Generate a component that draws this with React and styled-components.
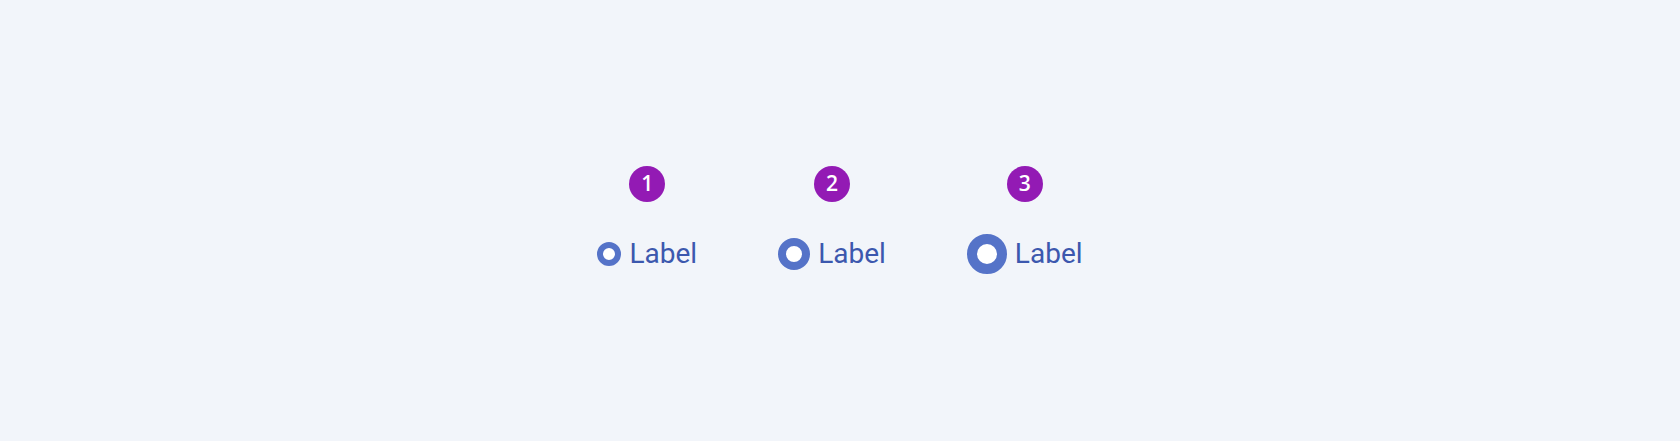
import styled, { createGlobalStyle } from "styled-components";

const GlobalStyle = createGlobalStyle`
  html, body {
    margin: 0;
    padding: 0;
    background: #f2f5fa;
  }
  body {
    font-family: "Open Sans", "Noto Sans", sans-serif;
  }
`;

const Page = styled.div`
  height: 439px;
  display: flex;
  align-items: center;
  justify-content: center;
  gap: 81px;
`;

const Column = styled.div`
  display: flex;
  flex-direction: column;
  align-items: center;
  gap: 32px;
`;

const Badge = styled.div`
  width: 36px;
  height: 36px;
  border-radius: 50%;
  background: #931ab4;
  color: #ffffff;
  display: flex;
  align-items: center;
  justify-content: center;
  font-size: 21px;
  font-weight: 600;
  line-height: 1;
`;

const RadioRow = styled.label`
  height: 40px;
  display: flex;
  align-items: center;
  gap: 8px;
`;

const Dot = styled.span`
  box-sizing: border-box;
  width: ${(p) => p.$size}px;
  height: ${(p) => p.$size}px;
  border-radius: 50%;
  border: ${(p) => p.$size / 4}px solid #5573c8;
  background: #ffffff;
`;

const Text = styled.span`
  font-family: Roboto, "Open Sans", sans-serif;
  font-size: 28px;
  color: #3c58ae;
  line-height: 1;
`;

const items = [
  { n: 1, size: 24 },
  { n: 2, size: 32 },
  { n: 3, size: 40 },
];

export default function App() {
  return (
    <>
      <GlobalStyle />
      <Page>
        {items.map((it) => (
          <Column key={it.n}>
            <Badge>{it.n}</Badge>
            <RadioRow>
              <Dot $size={it.size} />
              <Text>Label</Text>
            </RadioRow>
          </Column>
        ))}
      </Page>
    </>
  );
}
